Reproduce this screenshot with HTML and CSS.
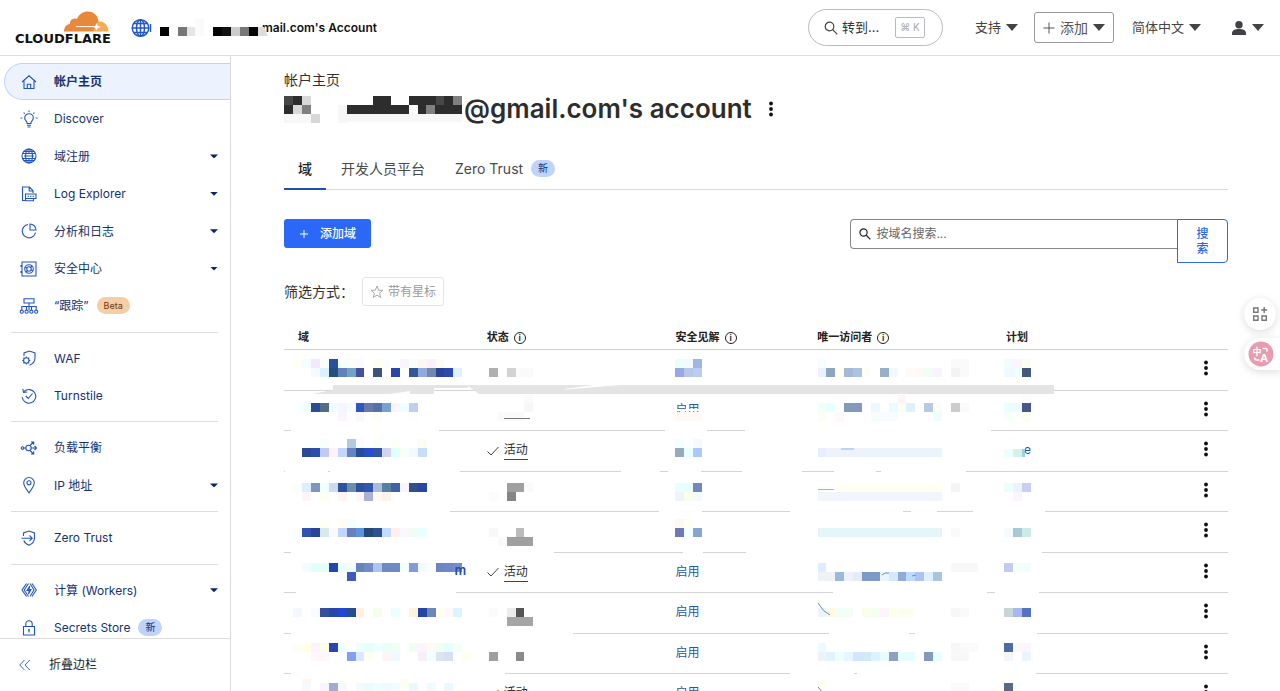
FILE: index.html
```html
<!DOCTYPE html>
<html lang="zh-CN">
<head>
<meta charset="utf-8">
<title>帐户主页 | Cloudflare</title>
<link rel="stylesheet" href="styles.css">
</head>
<body>
<header class="topbar">
  <a class="logo" href="#">
    <svg class="logo-cloud" viewBox="0 0 46 22" aria-hidden="true">
      <path fill="#e8883a" d="M1 20.500C1 16.500 3 13.200 7 13C6.500 9.500 10 6.500 14 8C16 3 20 0.500 25 0.500C31 0.500 35 5 35.500 10L33 16L30.500 20.500Z"/>
      <path fill="#f3ad55" d="M34.500 10.200C41 9.500 45.500 14 45.500 20.500H30.500L33 16.500Z"/>
      <path fill="none" stroke="#fff" stroke-width="1" d="M13 15.600H31"/>
      <path fill="#fff" d="M33.500 12L34.800 14.700L38 16L34.800 17L33.500 19.500L32.300 17L30 16L32.300 14.800Z"/>
    </svg>
    <span class="logo-word">CLOUDFLARE</span>
  </a>
  <a class="account" href="#">
    <svg class="globe" viewBox="0 0 20 20" fill="none" stroke="#2458c5" stroke-width="1.500" aria-hidden="true"><circle cx="9.500" cy="10" r="8.300"/><ellipse cx="9.500" cy="10" rx="4" ry="8.300"/><path d="M9.500 1.700v16.600M1.200 10h16.600M2.700 5.500h13.600M2.700 14.500h13.600M19.500 6v8"/></svg>
    <span>mail.com's Account</span>
    <svg class="account-mask" viewBox="0 0 108 20" shape-rendering="crispEdges" aria-hidden="true"><path fill="#050505" d="M5 8h9v9H5zM58 8h9v9h-9zM94 8h9v9h-9z"/><path fill="#111" d="M67 8h9v9h-9z"/><path fill="#777" d="M23 8h9v9h-9zM85 8h9v9h-9z"/><path fill="#e5e5e5" d="M32 8h8v9h-8z"/><path fill="#fafafa" d="M40 0h9v17h-9z"/><path fill="#ccc" d="M76 8h9v9h-9z"/><path fill="#ddd" d="M103 8h6l4 9h-10z"/></svg>
  </a>
  <nav class="top-actions">
    <button class="goto" type="button">
      <svg class="ic14" viewBox="0 0 14 14" fill="none" stroke="#444" stroke-width="1.200"><circle cx="5.500" cy="5.500" r="4.300"/><path d="M8.700 8.700L13.300 13.300"/></svg>
      <span>转到...</span><kbd>⌘ K</kbd>
    </button>
    <button class="menu" type="button">支持<i class="caret"></i></button>
    <button class="menu add" type="button"><svg class="ic12" viewBox="0 0 12 12" stroke="#555"><path d="M6 .5v11M.5 6h11"/></svg>添加<i class="caret"></i></button>
    <button class="menu lang" type="button">简体中文<i class="caret"></i></button>
    <button class="menu user" type="button" aria-label="用户"><svg class="ic14" viewBox="0 0 14 14" fill="#404145"><circle cx="7" cy="3.700" r="3.700"/><path d="M0 14v-1.500C0 9 3 8 7 8s7 1 7 4.500V14z"/></svg><i class="caret"></i></button>
  </nav>
</header>

<div class="layout">
  <aside class="sidebar">
    <nav class="side-nav">
      <a class="item active" href="#"><svg viewBox="0 0 16 16"><path d="M1 8L8 1.800L15 8M3 6.500V14.500H13V6.500M6.300 14.500V10.300H9.700V14.500"/></svg>帐户主页</a>
      <a class="item" href="#"><svg viewBox="0 0 16 16"><path d="M6 12.500V11.500C6 10.300 3.700 9.500 3.700 7A4.300 4.300 0 0 1 12.300 7C12.300 9.500 10 10.300 10 11.500V12.500ZM6 14.300H10M6.500 16H9.500M8 -.5V1M-.5 7H1.300M14.700 7H16.500M2.600 1.600L3.700 2.700M13.400 1.600L12.300 2.700"/></svg>Discover</a>
      <a class="item" href="#"><svg viewBox="0 0 16 16"><circle cx="8" cy="8" r="7"/><ellipse cx="8" cy="8" rx="3.500" ry="7"/><path d="M8 1V5.500M8 10.500V15M1 5.500H15M1 10.500H15M2.500 3.500H13.500M2.500 12.500H13.500M3 8H13" /></svg>域注册<i class="arrow"></i></a>
      <a class="item" href="#"><svg viewBox="0 0 16 16"><path d="M4 14.500H1.500V1H8.500L12 4.700V7M8.200 1V5H12M4.500 8H15V12.500H4.500ZM12.500 12.500V14.800H4.500V12.500M6.500 10.300H8M9 10.300H10.500M11.500 10.300H13"/></svg>Log Explorer<i class="arrow"></i></a>
      <a class="item" href="#"><svg viewBox="0 0 16 16"><path d="M7 1.500A6.700 6.700 0 1 0 14.500 9.500M9 1A6 6 0 0 1 15 7H9Z"/></svg>分析和日志<i class="arrow"></i></a>
      <a class="item" href="#"><svg viewBox="0 0 16 16"><path d="M1 1H15V15H1ZM0 4V6M0 10V12"/><circle cx="8" cy="8" r="4.300"/><circle cx="8" cy="8" r="2.200"/><path d="M4 6L6 7M10 9L12 10M5 11L6.500 9.500M9.500 6.500L11 5"/></svg>安全中心<i class="arrow"></i></a>
      <a class="item" href="#"><svg viewBox="0 0 16 16"><path d="M3 .8H13V5H3ZM8 5V12M.8 12V8.500H15.200V12M5.500 8.500V12M10.500 8.500V12"/><circle cx=".8" cy="13.700" r="1.600"/><circle cx="5.600" cy="13.700" r="1.600"/><circle cx="10.400" cy="13.700" r="1.600"/><circle cx="15.200" cy="13.700" r="1.600"/></svg>“跟踪”<span class="badge beta">Beta</span></a>
      <hr>
      <a class="item" href="#"><svg viewBox="0 0 16 16"><path d="M3 6V3L8.500 1L14 3V8C14 11.500 11.500 14 8.500 15.200"/><circle cx="5.300" cy="10.500" r="2.700"/><path d="M5.300 6.500V7.800M5.300 13.200V14.500M1.300 10.500H2.600M8 10.500H9.300M2.500 7.700L3.400 8.600M7.200 12.400L8.100 13.300M8.100 7.700L7.200 8.600M3.400 12.400L2.500 13.300"/></svg>WAF</a>
      <a class="item" href="#"><svg viewBox="0 0 16 16"><path d="M1.200 9A6.800 6.800 0 1 0 3.200 3.500M1.800 .8L2.500 4.500L6.200 4M4.800 8L7.300 10.500L11.500 5.500"/></svg>Turnstile</a>
      <hr>
      <a class="item" href="#"><svg viewBox="0 0 16 16"><circle cx="1.500" cy="8" r="1.300"/><circle cx="7.500" cy="8" r="2.700"/><path d="M2.800 8H4.800M10.200 8H15.500M13.500 6L15.500 8L13.500 10M9 5.500L12.500 2M10 2H12.700V4.700M9 10.500L12.500 14M10 14H12.700V11.300"/></svg>负载平衡</a>
      <a class="item" href="#"><svg viewBox="0 0 16 16"><path d="M8 15.800C5 12 2.700 9 2.700 5.800A5.300 5.300 0 0 1 13.300 5.800C13.300 9 11 12 8 15.800Z"/><circle cx="8" cy="5.800" r="2"/></svg>IP 地址<i class="arrow"></i></a>
      <hr>
      <a class="item" href="#"><svg viewBox="0 0 16 16"><path d="M2.500 6V3L8 1L13.500 3V8C13.500 11.500 11 14 8 15.200C5.500 14 3.500 12.500 2.800 10.500M.5 8.200H11M8.500 5.500L11.200 8.200L8.500 10.900"/></svg>Zero Trust</a>
      <hr>
      <a class="item" href="#"><svg viewBox="0 0 16 16"><path d="M5.500 1.500L1 8L5.500 14.500M7.500 1.500L3.200 8L7.500 14.500M9 1.500L13 8L9 14.500M11 1.500L15.300 8L11 14.500M8.800 4L6 8.500H8.200L7.500 12L10 7.500H8Z"/></svg>计算 (Workers)<i class="arrow"></i></a>
      <a class="item" href="#"><svg viewBox="0 0 16 16"><path d="M2.500 6.500H13.500V15H2.500ZM4.800 6.500V4A3.200 3.200 0 0 1 11.200 4V6.500M8 9V12.500M7 10H9"/></svg>Secrets Store<span class="badge">新</span></a>
    </nav>
    <button class="collapse" type="button"><svg viewBox="0 0 12 12" fill="none" stroke="#3d6bd0"><path d="M5.500 1L.8 6L5.500 11M10.800 1L6 6L10.800 11"/></svg>折叠边栏</button>
  </aside>

  <main class="content">
    <p class="eyebrow">帐户主页</p>
    <div class="title-row">
      <svg class="title-mask" viewBox="0 0 180 28" shape-rendering="crispEdges" aria-hidden="true"><path fill="#474747" d="M0 1h9v9H0zM151 1h9v9h-9z"/><path fill="#2d2d2d" d="M9 1h9v9H9zM0 10h9v9H0zM63 10h62v9H63zM89 1h18v9H89zM125 1h27v9h-27zM134 10h10v9h-10zM151 10h9v9h-9zM160 1h9v9h-9zM160 10h18v9h-18z"/><path fill="#d8d8d8" d="M18 1h9v9h-9zM9 10h9v9H9zM27 19h9v9h-9z"/><path fill="#808080" d="M18 10h9v9h-9zM142 10h9v9h-9zM169 1h9v9h-9z"/><path fill="#f7f7f7" d="M0 19h27v9H0zM54 10h9v18h-9zM63 19h115v8H63z"/></svg>
      <h1>@gmail.com's account</h1>
      <button class="dots" type="button" aria-label="更多"><svg viewBox="0 0 6 16"><circle cx="3" cy="2.500" r="1.900"/><circle cx="3" cy="8" r="1.900"/><circle cx="3" cy="13.500" r="1.900"/></svg></button>
    </div>
    <nav class="tabs">
      <a class="tab current" href="#">域</a>
      <a class="tab" href="#">开发人员平台</a>
      <a class="tab" href="#">Zero Trust<span class="badge">新</span></a>
    </nav>
    <div class="toolbar">
      <button class="add-domain" type="button"><svg viewBox="0 0 10 10" stroke="#fff"><path d="M5 1v8M1 5h8"/></svg>添加域</button>
      <form class="search">
        <label class="search-box">
          <svg viewBox="0 0 14 14" fill="none" stroke="#222" stroke-width="1.400"><circle cx="5.300" cy="5.300" r="4.200"/><path d="M8.500 8.500L13.300 13.300"/></svg>
          <input type="text" aria-label="按域名搜索" placeholder="按域名搜索...">
        </label>
        <button class="search-btn" type="button">搜索</button>
      </form>
    </div>
    <div class="filters">
      <span>筛选方式：</span>
      <button class="star" type="button"><svg viewBox="0 0 14 14" fill="none" stroke="#aaa"><path d="M7 1L8.600 5.200L13 5.400L9.600 8.200L10.700 12.500L7 10.100L3.300 12.500L4.400 8.200L1 5.400L5.400 5.200Z"/></svg>带有星标</button>
    </div>
    <div class="table-wrap">
      <table class="domains">
        <thead><tr><th class="c-domain">域</th><th class="c-status">状态<span class="info">i</span></th><th class="c-sec">安全见解<span class="info">i</span></th><th class="c-visit">唯一访问者<span class="info">i</span></th><th class="c-plan">计划</th><th class="c-more"></th></tr></thead>
        <tbody id="rows"></tbody>
      </table>
      <svg class="redaction" id="redaction" aria-hidden="true"></svg>
    </div>
  </main>
</div>

<div class="floaters">
  <button class="float-btn" type="button" aria-label="应用"><svg viewBox="0 0 16 16" fill="none" stroke="#777" stroke-width="1.400"><path d="M1.700 2H6V6.300H1.700ZM1.700 10H6V14.300H1.700ZM10 10H14.300V14.300H10ZM12.200 1V7M9.200 4H15.200"/></svg></button>
  <button class="float-btn translate" type="button" aria-label="翻译"><svg viewBox="0 0 26 26"><circle cx="13" cy="13" r="12.500" fill="#e99bb0"/><path d="M14.500 7.500H18Q19 7.500 19 9V10.500M6.500 16.500Q6.500 19 9 19H11.500" fill="none" stroke="#fff" stroke-width="1.600"/><text x="4.500" y="13.500" class="t-zh">中</text><text x="12" y="20.500" class="t-a">A</text></svg></button>
</div>
<script src="table.js"></script>
</body>
</html>
```
FILE: styles.css
```css
* { box-sizing: border-box; }
body {
  margin: 0; height: 100vh; overflow: hidden;
  display: flex; flex-direction: column;
  font: 12px/1.5 Inter, "Noto Sans CJK SC", sans-serif;
  color: #313131; background: #fff;
}
a { color: inherit; text-decoration: none; }
button, input { font: inherit; color: inherit; }
button { background: none; border: 0; padding: 0; cursor: pointer; }
svg { flex: none; overflow: visible; }

.topbar { display: flex; align-items: center; flex: none; height: 56px; padding: 0 16px 0 15px; border-bottom: 1px solid #dedede; }
.logo { display: flex; flex-direction: column; width: 94px; }
.logo-cloud { width: 46px; height: 22px; align-self: flex-end; }
.logo-word { font: bold 13px/12px "DejaVu Sans", sans-serif; color: #111; }
.account { position: relative; display: flex; align-items: center; gap: 111px; margin-left: 22px; font-size: 12px; font-weight: 600; color: #111; }
.globe { width: 20px; height: 20px; }
.account-mask { position: absolute; left: 24px; top: 1px; width: 108px; height: 20px; }
.top-actions { display: flex; align-items: center; margin-left: auto; font-size: 13px; }
.goto { display: flex; align-items: center; gap: 4px; width: 135px; height: 37px; padding: 0 17px 0 15px; border: 1px solid #bbb; border-radius: 19px; color: #333; }
.goto kbd { margin-left: auto; width: 30px; height: 21px; border: 1px solid #bbb; border-radius: 2px; font: 10px/19px Inter, "DejaVu Sans", sans-serif; color: #aaa; text-align: center; }
.ic14 { width: 14px; height: 14px; }
.ic12 { width: 12px; height: 12px; }
.menu { display: flex; align-items: center; gap: 5px; margin-left: 32px; color: #444; }
.menu.add { height: 31px; margin-left: 16px; padding: 0 8px; border: 1px solid #999; border-radius: 3px; font-size: 14px; color: #555; }
.menu.lang { margin-left: 18px; }
.menu.user { gap: 6px; margin-left: 31px; }
.caret { width: 12px; height: 7px; background: #444; clip-path: polygon(0 0, 100% 0, 50% 100%); }

.layout { display: flex; flex: 1; min-height: 0; }
.sidebar { display: flex; flex-direction: column; flex: none; width: 231px; border-right: 1px solid #d9d9d9; color: #16326f; }
.side-nav { flex: 1; min-height: 0; overflow: hidden; padding: 7px 0 0 4px; line-height: 1.615; }
.item { display: flex; align-items: center; padding: 9px 12px 9px 17px; }
.item svg { width: 16px; height: 16px; margin-right: 17px; fill: none; stroke: #2355c0; stroke-width: 1.1; }
.item.active { padding: 8px 12px 8px 16px; border: 1px solid #bfd3f7; border-right: 0; border-radius: 19px 0 0 19px; background: #ecf3fe; font-weight: 600; }
.arrow { width: 8px; height: 4px; margin-left: auto; background: #0a2466; clip-path: polygon(0 0, 100% 0, 50% 100%); }
.side-nav hr { height: 1px; margin: 7px 12px 7px 7px; border: 0; background: #dedede; }
.badge { margin-left: 8px; padding: 0 7px; border-radius: 9px; background: #bfd3fb; color: #16326f; font-size: 10px; line-height: 17px; }
.badge.beta { background: #f6cda5; color: #5f3a18; font-size: 9px; }
.collapse { display: flex; align-items: center; gap: 18px; flex: none; height: 53px; padding-left: 19px; border-top: 1px solid #dedede; color: #222; }
.collapse svg { width: 12px; height: 12px; }

.content { flex: 1; min-width: 0; overflow: hidden; padding: 14px 52px 0 53px; }
.eyebrow { margin: 0; font-size: 14px; line-height: 20px; }
.title-row { display: flex; align-items: center; height: 38px; }
.title-mask { width: 180px; height: 28px; }
h1 { margin: 0; font-size: 26px; line-height: 38px; font-weight: 600; color: #2d2d2d; }
.dots { display: inline-flex; }
.dots svg { width: 6px; height: 16px; fill: #111; }
.title-row .dots { margin-left: 16px; }
.tabs { display: flex; gap: 15px; height: 42px; margin-top: 20px; border-bottom: 1px solid #d9d9d9; font-size: 14px; line-height: 41px; }
.tab { display: flex; align-items: center; height: 41px; color: #4a4a4a; }
.tab + .tab { padding-right: 15px; }
.tab.current { height: 42px; padding: 0 14px; border-bottom: 2px solid #1f4fb0; font-weight: 500; color: #222; }
.toolbar { display: flex; align-items: flex-start; justify-content: space-between; margin-top: 29px; }
.add-domain { display: flex; align-items: center; gap: 11px; height: 29px; padding: 0 15px; border-radius: 3px; background: #2c68f8; color: #fff; font-weight: 500; }
.add-domain svg { width: 10px; height: 10px; }
.search { display: flex; align-items: flex-start; width: 40%; }
.search-box { display: flex; align-items: center; gap: 5px; flex: 1; height: 30px; padding: 0 8px; border: 1px solid #888; border-right: 0; border-radius: 4px 0 0 4px; }
.search-box svg { width: 12px; height: 12px; }
.search-box input { flex: 1; min-width: 0; padding: 0; border: 0; outline: 0; background: none; }
.search-box input::placeholder { color: #666; }
.search-btn { width: 51px; height: 44px; padding: 0 18px; border: 1px solid #2c68e8; border-radius: 0 4px 4px 0; color: #2c68e8; font-weight: 500; line-height: 15px; }
.filters { display: flex; align-items: center; gap: 8px; margin-top: 14px; font-size: 14px; }
.star { display: flex; align-items: center; gap: 4px; height: 29px; padding: 0 7px; border: 1px solid #e5e5e5; border-radius: 3px; color: #999; font-size: 12px; }
.star svg { width: 14px; height: 14px; }

.table-wrap { position: relative; margin-top: 18px; }
.domains { width: 100%; table-layout: fixed; border-collapse: separate; border-spacing: 0; font-size: 13px; }
.domains th { height: 26px; padding: 1px 14px 0; border-bottom: 1px solid #d0d0d0; text-align: left; font-size: 11px; font-weight: 600; color: #222; }
.domains td { padding: 10px 14px; border-bottom: 1px solid #d4d4d4; vertical-align: top; }
.c-domain, .c-status, .c-visit, .c-plan { width: 20%; }
.c-sec { width: 15%; }
.domains .more { padding: 10px 0 10px 3px; text-align: center; line-height: 0; }
.info { display: inline-block; width: 12px; height: 12px; margin-left: 5px; border: 1px solid #222; border-radius: 50%; text-align: center; font: 600 9px/10px Inter, sans-serif; }
.status { display: flex; align-items: center; gap: 5px; font-size: 12px; line-height: 18px; }
.status svg { width: 12px; height: 10px; fill: none; stroke: #444; }
.status span { border-bottom: 1px solid #444; }
.domains a { display: block; color: #2754a8; font-size: 12px; line-height: 17px; }
.redaction { position: absolute; top: 0; left: 0; width: 100%; height: 100%; pointer-events: none; }
.redaction text { font: 600 13px Inter, sans-serif; fill: #2450b0; }

.floaters { position: absolute; right: 0; top: 298px; display: flex; flex-direction: column; align-items: flex-end; gap: 8px; }
.float-btn { display: flex; align-items: center; justify-content: center; width: 32px; height: 32px; margin-right: 4px; border-radius: 16px; background: #fff; box-shadow: 0 2px 8px rgba(0, 0, 0, 0.14); }
.float-btn svg { width: 16px; height: 16px; }
.float-btn.translate { width: 36px; margin-right: 0; padding-right: 3px; border-radius: 16px 0 0 16px; }
.translate svg { width: 26px; height: 26px; }
.t-zh { font: bold 9px "Noto Sans CJK SC", sans-serif; fill: #fff; }
.t-a { font: bold 11px Inter, sans-serif; fill: #fff; }
```
FILE: table.js
```js
// Table rows: [active status, security insight, plan]
const rows = [
  [0, 0, 0], [0, 1, 0], [1, 0, 1], [0, 0, 0], [0, 0, 0],
  [1, 1, 0], [0, 1, 0], [0, 1, 0], [1, 1, 0]
];
const status = '<div class="status"><svg viewBox="0 0 12 10"><path d="M.5 5.500L4 9L11.500 1"/></svg><span>活动</span></div>';
const dots = '<button class="dots" type="button" aria-label="更多"><svg viewBox="0 0 6 16"><circle cx="3" cy="2.500" r="1.900"/><circle cx="3" cy="8" r="1.900"/><circle cx="3" cy="13.500" r="1.900"/></svg></button>';
document.getElementById('rows').innerHTML = rows.map(([s, sec, plan]) =>
  `<tr><td>&nbsp;</td><td>${s ? status : ''}</td><td>${sec ? '<a href="#">启用</a>' : ''}</td><td></td><td>${plan ? '<a href="#">Free</a>' : ''}</td><td class="more">${dots}</td></tr>`
).join('');

// Mosaic tiles, one entry per tile row: "column[+span]:colour"
const mosaic = {
  0: '1:fffff4 2:f3ffff 3:f3e8ff 4:f6fff8 5:2950a0 6:f5ffff 7:fafff6 8:fafaff 10:fbffeb 11:fafffd 13:f8f5ff 14:fafffa 15:fff8f2 16:fff0f7 17:fffdf2 44:e8fffa 45:f2faff 46:a0b6e2 60:f5fdff 75+2:fafafa 81:f0fdff 82:fff3ff 83:fbfff0',
  1: '3:f5fbff 4:d8f3ff 5:264e80 6:6282bb 7:72a4c4 8:45509c 10:3b5478 12:2b46a6 14:34569b 15:92a9dd 16:7088aa 17:2e4398 18:2c49b0 19:e0f4ff 23:b0b0b0 25:d2d2d2 26+2:fafafa 44:98a8e2 45:b8c6ea 46:bccbf2 60:e8f3ff 61:8ea5c2 62:fffff0 63:a5b8d6 64:abc3dd 65:fcfff5 67:98aec9 68:f3faff 70+2:fffaf5 72:f0fff5 73:fbf2ff 75:f3f3f3 76:fafafa 81:f0f9ff 82:effdff 83:42597c',
  4: '27:fbfbfb 45:fff3fa 46:fafdff 69:fff5f7 83:fcfff8',
  5: '1:faffff 2:edffff 3:2b4b92 4:526c83 5:edffff 6:f8f5ff 7:f5fffa 8:2c59bd 9:6878a8 10:5570aa 11:77a0d3 12:faf5ff 13:f2fdff 14:c2cdf3 27:f7f7f7 60:f0fff8 61:e7ffff 63:839bbb 64:8597bd 66:ecf9ff 68:eafcff 69:fffcf2 70:dcf3ff 72:b9c9df 73:fffdf2 75:cccccc 76:fafafa 81:e8ffff 82:effaff 83:485689',
  6: '6:fbf5ff 8:f8f8ff 10:fcfff4 14:fafff8 24+3:fafafa 44+3:fffaf7 60:fafff4 62:fff8fa 66+3:f7fdff 73:f0fdff 81:f7fffa 83:faffef',
  9: '4:f8fffa 7:b3c9df 8:f8fcff 10:fafff4 12:fafff8 15:fffbf2 44:f2ffff 46:f5faff 81:feffe5',
  10: '2:2c4993 3:2c4cae 4:c1caf5 5:fff0f9 6:c1d7ff 7:6883c4 8:264f98 9:2850cd 10:3655a0 11:d2d3f1 12:e0ffff 13:f8fff8 14:f2faff 15:c7def8 44:96aaba 45:e8ffff 46:afc8fc 60:e9eeff 61+13:edf3fb 81:ebffff 82:d4f1ea 83+0.3:9ed0df',
  14: '1:fafff9 2:dceeff 3:8394bb 4:edffff 5:cbdbf1 6:2e529b 7:688eb0 8:2953a2 9:3456aa 10:a8bddb 11:5582a4 12:4360a4 13:f9f5ff 14:30528b 15:2a45a2 25+2:a0a0a0 27:fafafa 44+2:e8ffff 46:7187bd 62+12:fffff3 75:f5f5f5 81:ebffff 82:ecf5ff 83:c9cef9',
  15: '2:fff5f9 4:fafff2 6:fff5f5 8:fff4f8 9:a8b2d4 10:fffafa 11:fff3e9 23:fcfcfc 25:858585 44:f1f3fb 45:faffe8 46:f4faff 60+14:f3f5fd 82:fcf5ff',
  18: '4:fffff4 6:fffdf2 7:f2ffff 44:fcf8f2 45:fffff0',
  19: '1:f8ffff 2:3150b0 3:284493 4:d8e9ec 5:fafafa 6:c1d7ff 7:6980bc 8:5b94dc 9:244878 10:2c5291 11:c6daff 12:fff0eb 13:faf8ff 14:edfff5 15:eaffff 23:f8f8f8 26:bcbcbc 44:7079b3 45:f0ffff 46:89a4cf 60+14:e5f6fb 75:fafafa 81:f4faff 82:a9c8d4 83:cdebe6',
  20: '24:fafafa 25+3:a0a0a0',
  23: '2:f3fcff 3:e0ffff 4:e5ffff 5:2448a9 6:ebffff 7:f2ffff 8:6584bb 9:728bc7 10:acc4ef 11:6f88c3 12:7089c4 13:f3ffff 14:7f9cda 15:f2faff 16:f8fffa 17:6c86c3 18:7188c8 19:738ecf 60:dceeff 75+3:f8f8f8 81:c4ccee 82:f4fff7 83:effffd',
  24: '6:f8fffc 7:3d5bb7 60+2:eff2f9 62:9db9d6 63:eff0fa 64:e4edf7 65+2:7c99c7 67:edf5fc 68:d5e8fc 69:90abd9 70:bddbff 71:adc5ed 72:e0eeff 73:a7c5df',
  28: '1:f3f8ff 3:f8fbff 4:35509a 5:2746ad 6:2247cf 7:284d8b 8:fff0df 10:f4ffe9 12:eaffff 14:fff2df 15:2447a6 16:6c88b9 17:ffffef 18:fffaf8 19:dbf5ff 23:fbfbfb 25:ececec 26:555555 60:ebf4ff 61:fff8e6 62+2:f3fff6 65:faffec 66:f4fff3 67:fff3fc 68:ffffed 69+2:f9fff1 75:f7f7f7 76:fafafa 81:c8d6d8 82:aab6ef 83:5673c2',
  29: '25+3:a5a5a5',
  32: '1:fafff7 2:ffffe6 3:fbf4ff 4:fbffe7 5:2849a9 6:f2ffff 8:edffff 9:e5fffa 10:edffff 11:eafffa 12:effff5 14:f0fff4 15:fff4fb 16:fffaf2 17:f2fff0 18:e5ffff 19:f5fff3 60:ecfbff 75:f7f7f7 76+2:fafafa 81:4e6ba4 82:fcf7fa 83:fbf6ff',
  33: '3+2:fff7f9 7:839fed 8:dbe8ff 9:ffffef 11:fff5f8 12:f2f8ff 15:f6f0f7 16:f2ffff 17:d9e5f3 18:d3e1f3 20:ffffef 23:9f9f9f 26:8b8b8b 60:eff2f9 61:dff4ff 62:ebffff 63:e7f6ff 64:d2e7ff 65:d3eaf5 66:daf4ff 67:e6fcff 68:8f9ec1 69+2:e5ffff 72:8599bb 73:e8ffff 75+2:f8f8f8 81:f0f6fa 83:e9f6ff',
  36: '2:fff6f4 13:faffef 60:fffff0',
  36.5: '2:f4faff 4:f7f5ff 5:9dadd4 6:f8f8ff 8:f2fcff 9:edf9ff 10:eaffff 11:eefaff 12:f2fcff 14:e8f9ff 16:effcff 18:e9f9ff 75+2:fafafa 81:576b87 82:fafcff'
};

// Erased stretches of the row rules: [y, [x start, x end], ...]
const gaps = [
  [106, [7, 155], [381, 423], [461, 707]],
  [146, [1, 44], [46, 176], [337, 376], [384, 417], [458, 518], [550, 592], [597, 682]],
  [187, [0, 166], [375, 418], [506, 619], [627, 653], [689, 761]],
  [227, [7, 270], [399, 419], [462, 758]],
  [268, [12, 172], [549, 703], [711, 755]],
  [308, [7, 289], [545, 625], [631, 753]],
  [349, [7, 221], [506, 570], [573, 752]]
];

let art = '';
for (const [y, ...spans] of gaps)
  for (const [a, b] of spans) art += `<rect x="${a}" y="${y - 3}" width="${b - a}" height="7" fill="#fff"/>`;
art += '<path fill="#fff" d="M402 76H405V94H402ZM391 85H418V87H391ZM396 90H400V94H396Z"/>';
art += '<g transform="translate(0.5 35)" shape-rendering="crispEdges">';
const size = 8.885;
for (const [row, tiles] of Object.entries(mosaic))
  for (const tile of tiles.split(' ')) {
    const [place, colour] = tile.split(':');
    const [col, span = 1] = place.split('+').map(Number);
    // Pale tiles around the partly legible word stay behind its letters
    if (row === '4' && col > 40 && col < 50) continue;
    art += `<rect x="${col * size}" y="${row * size}" width="${span * size}" height="${size}" fill="#${colour}"/>`;
  }
// Left part of the plan name
art += `<rect x="${81 * size}" y="${9.1 * size}" width="${2.3 * size}" height="${size}" fill="#fff"/>`;
art += '</g>';
art += '<path fill="#e4e4e4" d="M49 61H770V70H195L184 62V65H150V70H126V67L106 70H28L49 66Z"/>';
art += '<path fill="#fff" d="M150 64L187 64V65H150ZM280 65L310 61H336L282 65.500Z"/>';
art += '<path stroke="#777" d="M220 94.500H246"/><path stroke="#8db5ee" stroke-width="1.200" d="M557 125H570M534 165.500H550"/>';
art += '<path stroke="#5a88e0" fill="none" d="M534 279Q539 288 546 291M534 363L539 369M598 251Q601 248 605 249M628 252L632 251"/>';
art += '<text x="170.500" y="251">m</text>';
document.getElementById('redaction').innerHTML = art;
```
